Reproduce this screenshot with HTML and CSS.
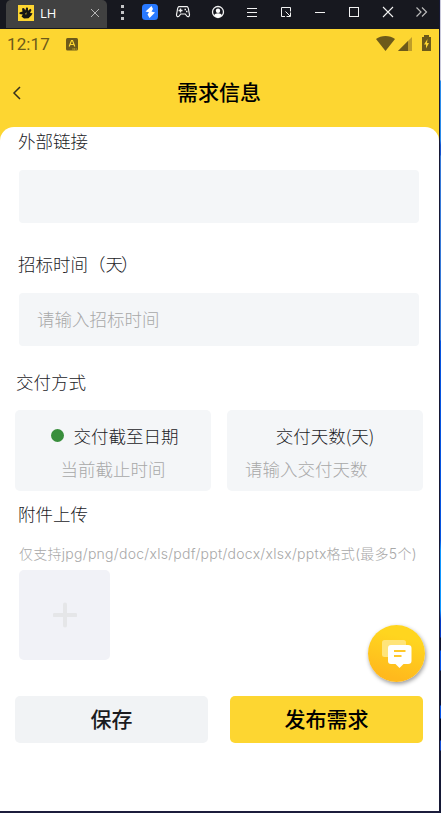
FILE: index.html
```
<!DOCTYPE html>
<html lang="zh-CN">
<head>
<meta charset="utf-8">
<title>需求信息</title>
<link rel="stylesheet" href="styles.css">
</head>
<body>
<div class="window">
  <header class="titlebar">
    <div class="tab">
      <svg class="tab-logo" width="16" height="16" viewBox="0 0 16 16"><rect width="16" height="16" fill="#fdd531"/><path d="M1.5 7.5 4.5 6.5 4 3.5 6 3 7.3 5.5 8.2 2.5 10 2.8 10 5.7 12.3 3.8 13.5 5 12 8 14.5 8.3 13.5 10.2 10.5 13.2 6 13.5 3.5 11.5 4.8 9.6 1.5 9Z" fill="#161515"/><path d="m7 8.5 2-1.2-1 3Z" fill="#a78d27"/></svg>
      <span class="tab-name">LH</span>
      <svg class="tab-close" width="10" height="10" viewBox="0 0 10 10"><path d="m1 1 8 8M9 1 1 9" stroke="#b5b5b5" fill="none"/></svg>
    </div>
    <svg class="tools" width="328" height="29" viewBox="112 0 328 29" fill="none" stroke="#f2f2f2" stroke-width="1.2">
      <path d="M121 5h3v3h-3zM121 11h3v3h-3zM121 17h3v3h-3z" fill="#c5c5c7" stroke="none"/>
      <rect x="142" y="4" width="16" height="16" rx="3.5" fill="#2879ff" stroke="none"/>
      <path d="M151.500 6 145.500 11.500 149 12.300 147.500 14.500 149.500 18 155 12.500 151.500 11.500 153 9Z" fill="#fff" stroke="none"/>
      <path d="M179 6.700h8c1.200 0 1.500 2 1.800 4.300l.7 3.700c.3 2-1.700 2.600-2.700 1.300l-1.500-2h-4.600l-1.500 2c-1 1.300-3 .7-2.700-1.300l.7-3.700c.3-2.300.600-4.300 1.800-4.300Z"/>
      <path d="M180.500 8.500v4M178.500 10.500h4M184.500 9.500h1.500M186 11.500h1.500" stroke-width="1.400"/>
      <circle cx="218" cy="12" r="5.500" stroke-width="1.300"/>
      <circle cx="218" cy="10.700" r="2.200" fill="#fff" stroke="none"/>
      <path d="M214 15.500c1-3 7-3 8 0-2 2.500-6 2.500-8 0Z" fill="#fff" stroke="none"/>
      <path d="M247 8.500h10M247 12.500h10M247 16.500h10" stroke-width="1"/>
      <path d="M285 16.500h-3.500v-9h9v4M285.500 11.500l4.500 4.500M286.500 16.500h4v-4" stroke-width="1"/>
      <path d="M315 12.500h10" stroke-width="1"/>
      <rect x="349.500" y="7.500" width="9" height="9" stroke-width="1"/>
      <path d="m383 7 10 10M393 7l-10 10" stroke-width="1.100"/>
      <path d="m416.500 7.500 4.500 4.500-4.500 4.500M422 7.500l4.500 4.500-4.500 4.500" stroke="#bbb"/>
    </svg>
  </header>

  <div class="hero">
    <div class="status">
      <span class="clock">12:17</span>
      <svg class="lang" width="12" height="13" viewBox="0 0 12 13"><rect width="12" height="12.500" rx="1.500" fill="#6d5a1a"/><path d="m3.200 8.500 2.300-6h1l2.300 6M4.200 6.500h3.600" fill="none" stroke="#fdd531" stroke-width="1.200"/><path d="M6.500 11h4" stroke="#fdd531" stroke-dasharray="1 .7"/></svg>
      <svg class="signals" width="56" height="17" viewBox="376 35 56 17"><path d="M376 39c5-4 14-4 19 0l-9.500 12Z" fill="#6d5a1a"/><path d="M412 37v14h-14Z" fill="#bf9d29"/><path d="M408 41v10h-10Z" fill="#6d5a1a"/><path d="M424 35h5v2h2v14h-9V37h2Z" fill="#6d5a1a"/><path d="m427.500 39-3.500 5.500h2v4l3-5.500h-2Z" fill="#fdd531"/></svg>
    </div>
    <div class="navbar">
      <svg class="back" width="10" height="14" viewBox="0 0 10 14"><path d="M8 1 2 7l6 6" fill="none" stroke="#35301d" stroke-width="1.500"/></svg>
      <h1 class="title">需求信息</h1>
    </div>
  </div>

  <main class="sheet">
    <div class="field">
      <div class="label">外部链接</div>
      <div class="input"></div>
    </div>
    <div class="field">
      <div class="label">招标时间（<span class="tight">天</span>）</div>
      <div class="input">请输入招标时间</div>
    </div>
    <div class="label label-mode">交付方式</div>
    <div class="modes">
      <div class="mode">
        <div class="mode-name mode-name-picked"><i class="dot"></i>交付截至日期</div>
        <div class="mode-value">当前截止时间</div>
      </div>
      <div class="mode">
        <div class="mode-name">交付天数(天)</div>
        <div class="mode-value mode-value-left">请输入交付天数</div>
      </div>
    </div>
    <div class="label label-upload">附件上传</div>
    <div class="hint">仅支持jpg/png/doc/xls/pdf/ppt/docx/xlsx/pptx格式(最多5个)</div>
    <div class="upload"><svg width="24" height="26" viewBox="0 0 24 26"><path d="M12 2.500v21M1.500 13h21" stroke="#e5e6e8" stroke-width="4" stroke-linecap="round"/></svg></div>
    <div class="actions">
      <div class="button">保存</div>
      <div class="button primary">发布需求</div>
    </div>
  </main>
  <div class="chat">
    <svg width="32" height="30" viewBox="0 0 32 30"><rect x="1" y="1" width="24" height="17" rx="2.500" fill="#ffe47a"/><path d="M10 6h17q3.500 0 3.500 3v13q0 3-3.500 3h-4.500l-4 4-4-4H10q-3 0-3-3V9q0-3 3-3Z" fill="#fff"/><path d="M13 12h11.500M13 17h7.500" stroke="#ffc82a" stroke-width="2"/></svg>
  </div>
</div>
<div class="edge"></div>
</body>
</html>
```

FILE: styles.css
```
* { box-sizing: border-box; }
body {
  margin: 0;
  width: 441px;
  height: 813px;
  display: flex;
  overflow: hidden;
  font-family: "Noto Sans CJK SC", sans-serif;
  font-weight: 300;
  color: #1b1b1f;
}
.window {
  position: relative;
  width: 440px;
  height: 813px;
  border-right: 1px solid #171936;
  border-bottom: 2px solid #1c1d3c;
  background: #fff;
}
.edge {
  width: 1px;
  background: linear-gradient(#c9c9dc 0 80px, #2b8bea 81px 140px, #1554cf 145px 155px, #3679d8 156px 340px, #0755e0 341px 540px, #1297ff 550px 610px, #063bc5 620px 637px, #111531 638px 650px, #0754e6 651px 670px, #111531 671px 705px, #0755e8 706px 718px, #070b20 719px 740px, #1650d5 741px 750px, #151936 751px);
}
.titlebar { display: flex; height: 29px; background: #17181f; }
.tab {
  display: flex;
  align-items: center;
  width: 101px;
  height: 28px;
  margin: 0 5px 0 6px;
  padding: 0 7px 2px 12px;
  border-radius: 5px 5px 0 0;
  background: #414141;
}
.tab-name {
  margin-left: 6px;
  font: 13px/20px "Open Sans", sans-serif;
  color: #fff;
}
.tab-close { margin-left: auto; }
.tools { flex: none; width: 328px; margin-right: -1px; }
.hero { height: 118px; background: #fdd631; }
.status { display: flex; align-items: center; height: 30px; padding: 0 7px; }
.clock { width: 59px; font: 17px/30px Roboto, sans-serif; letter-spacing: .1px; color: #6d5a1a; }
.signals { margin-left: auto; margin-top: -2px; }
.navbar { display: flex; align-items: center; height: 67px; padding: 0 12px; }
.title { flex: 1; margin: -4px 11px 0 0; text-align: center; font-size: 21px; line-height: 30px; font-weight: 500; color: #000; }
.sheet {
  height: 684px;
  margin-top: -20px;
  padding: 3px 16px 0 15px;
  border-radius: 14px 14px 0 0;
  background: #fff;
}
.label { height: 24px; font-size: 17.500px; line-height: 22px; white-space: nowrap; }
.tight { letter-spacing: -2px; }
.field { margin: 0 4px 30px; }
.field .label { margin-left: -1px; }
.input {
  height: 53px;
  margin-top: 16px;
  padding-left: 18px;
  border-radius: 4px;
  background: #f4f6f8;
  font-size: 17.500px;
  line-height: 52px;
  color: #a8a8a8;
}
.label-mode { margin: -5px 0 15px 1px; }
.modes { display: grid; grid-template-columns: 196px 196px; gap: 16px; }
.mode { height: 81px; padding-top: 9px; border-radius: 5px; background: #f4f6f8; text-align: center; }
.mode-name { display: flex; align-items: center; justify-content: center; height: 33px; font-size: 17.500px; }
.mode-name-picked { padding-left: 3px; }
.dot { width: 13px; height: 13px; margin-right: 10px; border-radius: 50%; background: #388e3c; }
.mode-value { height: 33px; font-size: 17.500px; line-height: 33px; color: #a8a8a8; }
.mode-value-left { padding-left: 18px; text-align: left; }
.label-upload { margin: 12px 0 0 3px; }
.hint { height: 20px; margin: 17px 0 6px 4px; font-family: Inter, "Noto Sans CJK SC", sans-serif; font-size: 14px; letter-spacing: .27px; line-height: 20px; white-space: nowrap; color: #a8a8a8; }
.upload { display: flex; align-items: center; justify-content: center; width: 91px; height: 90px; margin-left: 4px; border-radius: 5px; background: #f1f2f7; }
.actions { display: grid; grid-template-columns: 193px 193px; gap: 22px; margin-top: 36px; }
.button { height: 47px; border-radius: 5px; background: #f1f3f5; text-align: center; font-size: 21px; line-height: 44px; font-weight: 500; }
.primary { background: #fdd631; color: #000; }
.chat {
  position: absolute;
  left: 368px;
  top: 625px;
  display: flex;
  align-items: center;
  justify-content: center;
  width: 57px;
  height: 57px;
  border-radius: 50%;
  background: linear-gradient(15deg, #ffb91d 15%, #ffd51f 75%);
  box-shadow: 1px 2px 4px rgba(0, 0, 0, .4);
}
```
